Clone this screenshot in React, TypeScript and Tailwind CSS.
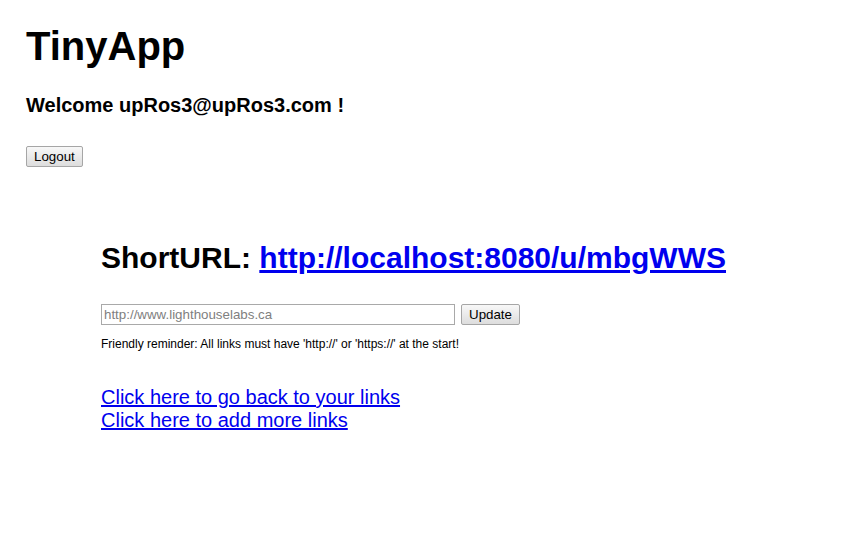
import React from "react";

const btn =
  "h-[21px] px-[7px] border border-[#a6a6a6] rounded-[2px] bg-gradient-to-b from-[#f8f8f8] to-[#dddddd] text-[13.33px] leading-[15px] text-black";

export default function App() {
  return (
    <div
      className="min-h-screen bg-white text-black pl-[26px] pt-[23px]"
      style={{ fontFamily: '"Liberation Sans", Arial, sans-serif' }}
    >
      <h1 className="text-[40px] leading-[46px] font-bold">TinyApp</h1>
      <h4 className="mt-[25px] text-[20px] leading-[23px] font-bold">
        Welcome upRos3@upRos3.com !
      </h4>
      <div className="mt-[29px] flex">
        <button className={btn}>Logout</button>
      </div>
      <div className="ml-[75px] mt-[74px] flex flex-col items-start">
        <h2 className="text-[30px] leading-[34px] font-bold whitespace-nowrap">
          ShortURL:{" "}
          <a href="#" className="text-[#0000ee] underline">
            http://localhost:8080/u/mbgWWS
          </a>
        </h2>
        <div className="mt-[29px] flex items-center gap-[6px]">
          <input
            type="text"
            placeholder="http://www.lighthouselabs.ca"
            className="w-[354px] h-[21px] border border-[#a9a9a9] px-[2px] text-[13.33px] placeholder:text-[#808080] outline-none"
          />
          <button className={btn}>Update</button>
        </div>
        <p className="mt-[12px] text-[12px] leading-[14px]">
          Friendly reminder: All links must have 'http://' or 'https://' at the start!
        </p>
        <div className="mt-[35px] flex flex-col items-start">
          <a href="#" className="text-[20px] leading-[23px] text-[#0000ee] underline">
            Click here to go back to your links
          </a>
          <a href="#" className="text-[20px] leading-[23px] text-[#0000ee] underline">
            Click here to add more links
          </a>
        </div>
      </div>
    </div>
  );
}
